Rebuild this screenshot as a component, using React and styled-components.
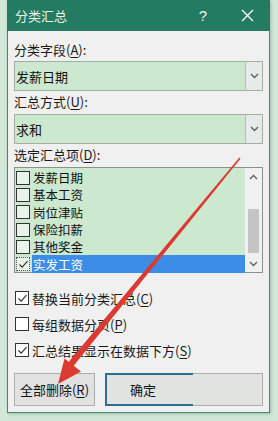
import React from 'react';
import styled, { createGlobalStyle } from 'styled-components';

const GlobalStyle = createGlobalStyle`
	html, body {
		margin: 0;
		padding: 0;
		background: #d3e7d7;
	}
	body {
		width: 278px;
		height: 421px;
		overflow: hidden;
		font-family: "Noto Sans CJK SC", "Liberation Sans", sans-serif;
	}
`;

const items = [
	{ label: '发薪日期', checked: false },
	{ label: '基本工资', checked: false },
	{ label: '岗位津贴', checked: false },
	{ label: '保险扣薪', checked: false },
	{ label: '其他奖金', checked: false },
	{ label: '实发工资', checked: true, selected: true },
];

const options = [
	{ text: '替换当前分类汇总', key: 'C', checked: true },
	{ text: '每组数据分页', key: 'P', checked: false },
	{ text: '汇总结果显示在数据下方', key: 'S', checked: true },
];

const Check = ({ checked, dotted }) => (
	<CheckBox dotted={dotted ? 1 : 0}>
		{checked && (
			<svg width='11' height='11' viewBox='0 0 11 11'>
				<path d='M1.5 5.5 L4.2 8.2 L9.5 2.2' fill='none' stroke='#333' strokeWidth='1.2' />
			</svg>
		)}
	</CheckBox>
);

const Chevron = ({ up }) => (
	<svg width='9' height='6' viewBox='0 0 9 6'>
		<path
			d={up ? 'M1 5 L4.5 1.5 L8 5' : 'M1 1 L4.5 4.5 L8 1'}
			fill='none'
			stroke='#606060'
			strokeWidth='1.4'
		/>
	</svg>
);

const App = () => {
	return (
		<>
			<GlobalStyle />
			<Page>
				<Dialog>
					<TitleBar>
						<Title>分类汇总</Title>
						<Help>?</Help>
						<Close>
							<svg width='13' height='13' viewBox='0 0 13 13'>
								<path d='M1 1 L12 12 M12 1 L1 12' stroke='#fff' strokeWidth='1.3' />
							</svg>
						</Close>
					</TitleBar>
					<Body>
						<Label mt={10}>
							分类字段(<u>A</u>):
						</Label>
						<Combo mt={2}>
							<ComboText>发薪日期</ComboText>
							<DropButton>
								<Chevron />
							</DropButton>
						</Combo>
						<Label mt={2}>
							汇总方式(<u>U</u>):
						</Label>
						<Combo mt={3}>
							<ComboText>求和</ComboText>
							<DropButton>
								<Chevron />
							</DropButton>
						</Combo>
						<Label mt={2}>
							选定汇总项(<u>D</u>):
						</Label>
						<List>
							<ListItems>
								{items.map((it) => (
									<Item key={it.label}>
										<Check checked={it.checked} dotted={it.selected} />
										<ItemText selected={it.selected ? 1 : 0}>{it.label}</ItemText>
									</Item>
								))}
							</ListItems>
							<ScrollBar>
								<ScrollArrow>
									<Chevron up />
								</ScrollArrow>
								<Track>
									<Thumb />
								</Track>
								<ScrollArrow>
									<Chevron />
								</ScrollArrow>
							</ScrollBar>
						</List>
						<Options>
							{options.map((o) => (
								<OptionRow key={o.key}>
									<OptionBox>
										<Check checked={o.checked} />
									</OptionBox>
									<span>
										{o.text}(<u>{o.key}</u>)
									</span>
								</OptionRow>
							))}
						</Options>
						<Buttons>
							<Button>
								全部删除(<u>R</u>)
							</Button>
							<DefaultButton>确定</DefaultButton>
						</Buttons>
					</Body>
				</Dialog>
				<Arrow width='278' height='421' viewBox='0 0 278 421'>
					<polygon points='239.4,157.6 240.6,158.4 71.5,368.5 66.5,364.5' fill='#dc3a30' />
					<polygon points='58,384 64.5,358.5 81,371.5' fill='#dc3a30' />
				</Arrow>
			</Page>
		</>
	);
};

const Page = styled.div`
	position: relative;
	width: 278px;
	height: 421px;
	padding: 0 8px 0 7px;
	box-sizing: border-box;
`;

const Dialog = styled.div`
	width: 263px;
	background: #f0f0f0;
	border: 1px solid #3f8a70;
	border-top: none;
	box-sizing: border-box;
	box-shadow: 1px 1px 3px rgba(60, 110, 80, 0.35);
`;

const TitleBar = styled.div`
	height: 31px;
	background: #237c62;
	margin: 0 -1px;
	display: flex;
	align-items: center;
	color: #fff;
	padding-left: 8px;
`;

const Title = styled.div`
	flex: 1;
	font-size: 13px;
	color: #e8f3ee;
`;

const Help = styled.div`
	font-size: 15px;
	font-family: "Liberation Sans", sans-serif;
	width: 16px;
	text-align: center;
	margin-right: 30px;
	color: #e8f3ee;
`;

const Close = styled.div`
	width: 13px;
	height: 13px;
	margin-right: 16px;
	display: flex;
`;

const Body = styled.div`
	padding: 0 6px 6px;
	display: flex;
	flex-direction: column;
`;

const Label = styled.div`
	margin-top: ${(p) => p.mt}px;
	height: 18px;
	line-height: 18px;
	font-size: 13px;
	color: #1a1a1a;

	u {
		text-decoration-thickness: 1px;
		text-underline-offset: 2px;
	}
`;

const Combo = styled.div`
	margin-top: ${(p) => p.mt}px;
	height: 30px;
	border: 1px solid #a3aea5;
	background: #cce8cf;
	box-sizing: border-box;
	display: flex;
	align-items: center;
`;

const ComboText = styled.div`
	flex: 1;
	padding-left: 1px;
	font-size: 13px;
	color: #111;
`;

const DropButton = styled.div`
	width: 16px;
	height: 28px;
	border-left: 1px solid #b8bfb9;
	background: #e6ebe7;
	display: flex;
	align-items: center;
	justify-content: center;
`;

const List = styled.div`
	margin-top: 3px;
	height: 106px;
	border: 1px solid #8a9190;
	background: #cce8cf;
	box-sizing: border-box;
	display: flex;
`;

const ListItems = styled.div`
	flex: 1;
	padding: 1px 0 0 1px;
`;

const Item = styled.div`
	height: 17.3px;
	display: flex;
	align-items: center;
`;

const CheckBox = styled.div`
	width: 12px;
	height: 12px;
	border: 1px solid ${(p) => (p.dotted ? '#555' : '#333')};
	border-style: ${(p) => (p.dotted ? 'dotted' : 'solid')};
	background: #e8f4ea;
	display: flex;
	align-items: center;
	justify-content: center;
	flex-shrink: 0;
`;

const ItemText = styled.div`
	flex: 1;
	height: 100%;
	display: flex;
	align-items: center;
	margin-left: 2px;
	padding-left: 1px;
	font-size: 12.5px;
	color: ${(p) => (p.selected ? '#fff' : '#111')};
	background: ${(p) => (p.selected ? '#3b8de6' : 'transparent')};
`;

const ScrollBar = styled.div`
	width: 17px;
	background: #f0f0f0;
	display: flex;
	flex-direction: column;
`;

const ScrollArrow = styled.div`
	height: 17px;
	display: flex;
	align-items: center;
	justify-content: center;
`;

const Track = styled.div`
	flex: 1;
	display: flex;
	flex-direction: column;
	justify-content: flex-end;
	padding: 0 3px 0 3px;
`;

const Thumb = styled.div`
	height: 44px;
	background: #c4c4c4;
	margin-bottom: 2px;
`;

const Options = styled.div`
	margin-top: 16px;
	display: flex;
	flex-direction: column;
	gap: 8px;
	padding-left: 1px;
`;

const OptionRow = styled.div`
	height: 18px;
	display: flex;
	align-items: center;
	font-size: 13px;
	color: #1a1a1a;

	u {
		text-underline-offset: 2px;
	}
`;

const OptionBox = styled.div`
	margin-right: 3px;

	& > div {
		background: #fff;
	}
`;

const Buttons = styled.div`
	margin-top: 14px;
	display: flex;
	gap: 10px;
`;

const Button = styled.div`
	width: 81px;
	height: 33px;
	box-sizing: border-box;
	border: 1px solid #adadad;
	background: #e1e1e1;
	display: flex;
	align-items: center;
	justify-content: center;
	font-size: 13px;
	color: #111;

	u {
		text-underline-offset: 2px;
	}
`;

const DefaultButton = styled(Button)`
	position: relative;
	width: 158px;
	justify-content: flex-start;
	padding-left: 24px;
	background: #e1e3e1;

	&::before {
		content: '';
		position: absolute;
		left: -1px;
		top: -1px;
		bottom: -1px;
		width: 86px;
		border: 2px solid #2f6e92;
		border-right: none;
	}
`;

const Arrow = styled.svg`
	position: absolute;
	left: 0;
	top: 0;
	pointer-events: none;
`;

export default App;
